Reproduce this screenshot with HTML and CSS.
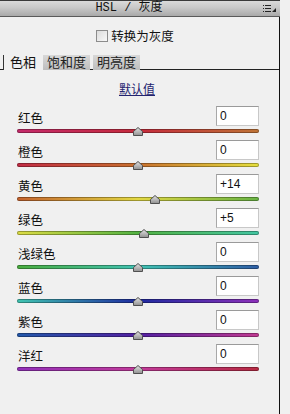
FILE: index.html
```html
<!DOCTYPE html>
<html lang="zh-CN">

<head>
    <meta charset="UTF-8" />
    <meta name="viewport" content="width=device-width, initial-scale=1.0" />
    <title>HSL / 灰度</title>
    <link rel="stylesheet" href="styles.css">
</head>

<body>
    <div class="panel">
        <div class="kopf">
            <span class="titel">HSL / 灰度</span>
            <svg class="menuIkon" width="14" height="8" viewBox="0 0 14 8">
                <rect x="0" y="0" width="1" height="1" fill="#222" />
                <rect x="0" y="3" width="1" height="1" fill="#222" />
                <rect x="0" y="6" width="1" height="1" fill="#222" />
                <rect x="2" y="0" width="6" height="1" fill="#222" />
                <rect x="2" y="3" width="6" height="1" fill="#222" />
                <rect x="2" y="6" width="6" height="1" fill="#222" />
                <polygon points="13,3 13,7 9,7" fill="#222" />
            </svg>
        </div>

        <div class="inhalt">
            <label class="grau"><span class="kasten"></span>转换为灰度</label>

            <div class="reiter">
                <span class="reiterPunkt aktiv">色相</span>
                <span class="reiterPunkt">饱和度</span>
                <span class="reiterPunkt">明亮度</span>
            </div>

            <div class="standard"><a>默认值</a></div>

            <div class="regler">
                <div class="zeile">
                    <div class="zeileOben"><span class="name">红色</span><span class="wert">0</span></div>
                    <div class="spur"><div class="balken rot"></div><span class="knopf" style="--v:0"></span></div>
                </div>
                <div class="zeile">
                    <div class="zeileOben"><span class="name">橙色</span><span class="wert">0</span></div>
                    <div class="spur"><div class="balken orange"></div><span class="knopf" style="--v:0"></span></div>
                </div>
                <div class="zeile">
                    <div class="zeileOben"><span class="name">黄色</span><span class="wert">+14</span></div>
                    <div class="spur"><div class="balken gelb"></div><span class="knopf" style="--v:14"></span></div>
                </div>
                <div class="zeile">
                    <div class="zeileOben"><span class="name">绿色</span><span class="wert">+5</span></div>
                    <div class="spur"><div class="balken gruen"></div><span class="knopf" style="--v:5"></span></div>
                </div>
                <div class="zeile">
                    <div class="zeileOben"><span class="name">浅绿色</span><span class="wert">0</span></div>
                    <div class="spur"><div class="balken aqua"></div><span class="knopf" style="--v:0"></span></div>
                </div>
                <div class="zeile">
                    <div class="zeileOben"><span class="name">蓝色</span><span class="wert">0</span></div>
                    <div class="spur"><div class="balken blau"></div><span class="knopf" style="--v:0"></span></div>
                </div>
                <div class="zeile">
                    <div class="zeileOben"><span class="name">紫色</span><span class="wert">0</span></div>
                    <div class="spur"><div class="balken lila"></div><span class="knopf" style="--v:0"></span></div>
                </div>
                <div class="zeile">
                    <div class="zeileOben"><span class="name">洋红</span><span class="wert">0</span></div>
                    <div class="spur"><div class="balken magenta"></div><span class="knopf" style="--v:0"></span></div>
                </div>
            </div>
        </div>
    </div>
</body>

</html>
```

FILE: styles.css
```css
body {
    margin: 0;
    background: #f0f0f0;
    font-family: "Noto Sans CJK SC", "DejaVu Sans", sans-serif;
    font-size: 12px;
    color: #111;
}

.panel {
    width: 280px;
    height: 414px;
}

.kopf {
    height: 15px;
    border-top: 1px solid #3a3a3a;
    border-bottom: 1px solid #5a5a5a;
    background: linear-gradient(#dadada, #c8c8c8 45%, #a9a9a9);
    display: flex;
    align-items: center;
    justify-content: center;
    position: relative;
    padding-right: 22px;
}

.titel {
    font-family: "Liberation Mono", "Noto Sans CJK SC", monospace;
    font-size: 12px;
    line-height: 15px;
    color: #111;
}

.menuIkon {
    position: absolute;
    right: 3px;
    top: 4px;
}

.inhalt {
    height: 397px;
    border-right: 1px solid #111;
}

.grau {
    display: flex;
    align-items: center;
    justify-content: center;
    gap: 3px;
    padding-top: 12px;
    padding-right: 9px;
    height: 14px;
    line-height: 14px;
    font-size: 12.5px;
}

.kasten {
    width: 10px;
    height: 10px;
    border: 1px solid #8c8c8c;
    background: linear-gradient(135deg, #dcdcdc, #f8f8f8);
}

.reiter {
    display: flex;
    margin-top: 12px;
    padding-left: 3px;
    height: 14px;
    border-bottom: 1px solid #222;
    font-size: 13px;
}

.reiterPunkt {
    height: 15px;
    line-height: 14px;
    padding: 0 4px;
    margin-right: 3px;
    background: linear-gradient(#d8d8d8, #bdbdbd);
    color: #222;
}

.reiterPunkt.aktiv {
    background: #f0f0f0;
    border-left: 1px solid #333;
    padding: 0 7px 0 6px;
    margin-right: 0;
    color: #111;
}

.standard {
    margin-top: 12px;
    height: 14px;
    line-height: 14px;
    text-align: center;
    padding-right: 5px;
}

.standard a {
    color: #23236e;
    text-decoration: underline;
}

.regler {
    margin-top: 10px;
}

.zeile {
    height: 34px;
    padding: 0 20px 0 17px;
}

.zeileOben {
    display: flex;
    justify-content: space-between;
    align-items: center;
    height: 20px;
}

.name {
    margin-left: 1px;
    padding-top: 2px;
    font-size: 12.5px;
}

.wert {
    width: 38px;
    height: 18px;
    line-height: 18px;
    padding-left: 3px;
    background: #fff;
    border: 1px solid #c8c8c8;
    border-top-color: #9a9a9a;
    border-left-color: #a8a8a8;
    font-family: "Liberation Sans", sans-serif;
}

.spur {
    position: relative;
    height: 10px;
}

.balken {
    position: relative;
    top: 3px;
    height: 4px;
    border-radius: 2px;
    box-shadow: inset 0 0 0 1px rgba(0, 0, 0, 0.3);
}

.rot {
    background: linear-gradient(to right, #c42a6a, #c52a3c 50%, #bf7436);
}

.orange {
    background: linear-gradient(to right, #c22c44, #c8702e 50%, #e6e03e);
}

.gelb {
    background: linear-gradient(to right, #c4622e, #e2d842 50%, #68b444);
}

.gruen {
    background: linear-gradient(to right, #dcdc44, #52b242 50%, #42c6a2);
}

.aqua {
    background: linear-gradient(to right, #4aae3e, #40c2b2 50%, #2e5ea6);
}

.blau {
    background: linear-gradient(to right, #40c4b0, #1e2aa0 50%, #8c30ba);
}

.lila {
    background: linear-gradient(to right, #2258aa, #5220a2 50%, #c23a92);
}

.magenta {
    background: linear-gradient(to right, #9230ba, #c23a9a 50%, #b82a42);
}

.knopf {
    position: absolute;
    top: 1px;
    left: calc(50% + var(--v) * 0.5% - 5px);
    width: 10px;
    height: 9px;
    background: url("data:image/svg+xml;utf8,<svg xmlns='http://www.w3.org/2000/svg' width='10' height='9'><defs><linearGradient id='g' x1='0' y1='0' x2='0' y2='1'><stop offset='0' stop-color='%23e4e4e4'/><stop offset='1' stop-color='%23909090'/></linearGradient></defs><path d='M5 0.5 L9.5 4.5 L9.5 8.5 L0.5 8.5 L0.5 4.5 Z' fill='url(%23g)' stroke='%23505050'/></svg>");
}
```
